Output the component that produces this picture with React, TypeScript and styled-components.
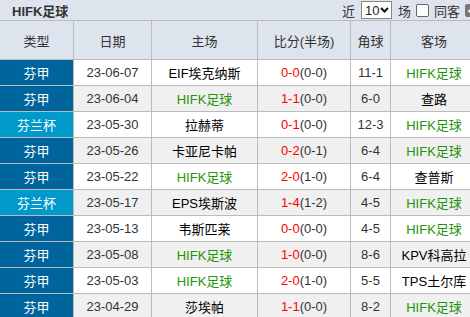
import React, { FC } from 'react';
import styled, { createGlobalStyle } from 'styled-components';

const GlobalStyle = createGlobalStyle`
  html, body {
    margin: 0;
    padding: 0;
    background: #fff;
    overflow: hidden;
  }
  body {
    font-family: "Liberation Sans", Arial, "Noto Sans CJK SC", sans-serif;
    font-size: 13px;
    color: #333;
  }
`;

const Panel = styled.div`
  width: 470px;
  height: 317px;
  overflow: hidden;
  background: #dee4ed;
`;

const TopBar = styled.div`
  height: 20px;
  display: flex;
  align-items: center;
  justify-content: space-between;
  padding-left: 12px;
  box-sizing: border-box;
`;

const Title = styled.div`
  font-weight: bold;
  font-size: 13px;
  color: #333;
  font-family: "Liberation Sans", "Noto Sans CJK SC", sans-serif;
`;

const Filters = styled.div`
  display: flex;
  align-items: center;
  gap: 3px;
  margin-right: -10px;
  font-size: 13px;
  color: #333;
`;

const Select = styled.div`
  width: 31px;
  height: 18px;
  box-sizing: border-box;
  border: 1px solid #888;
  background: #fff;
  display: flex;
  align-items: center;
  justify-content: space-between;
  padding: 0 2px 0 3px;
  font-size: 13px;
  color: #222;
  margin: 0 3px;
`;

const Box = styled.span<{ checked?: boolean }>`
  width: 13px;
  height: 13px;
  box-sizing: border-box;
  border-radius: 2px;
  border: 1px solid ${({ checked }) => (checked ? '#777' : '#666')};
  background: ${({ checked }) => (checked ? '#777' : '#fff')};
  display: inline-flex;
  align-items: center;
  justify-content: center;
  margin: 0 2px;
`;

const Table = styled.table`
  border-collapse: collapse;
  table-layout: fixed;
  width: 472px;
`;

const Th = styled.th<{ w: number }>`
  width: ${({ w }) => w}px;
  height: 38px;
  padding: 0;
  border: 1px solid #bbb;
  border-left: ${({ w }) => (w === 73 ? 'none' : '1px solid #bbb')};
  background: #dee4ed;
  font-weight: normal;
  color: #333;
  text-align: center;
`;

const Row = styled.tr<{ alt: boolean }>`
  background: ${({ alt }) => (alt ? '#f0f0f0' : '#fff')};
`;

const Td = styled.td`
  height: 25px;
  padding: 0;
  border: 1px solid #bbb;
  text-align: center;
  white-space: nowrap;
  color: #333;
`;

const TypeCell = styled(Td)<{ cup: boolean }>`
  border-left: none;
  background: ${({ cup }) => (cup ? '#0099cc' : '#00659c')};
  color: #fff;
`;

const Team = styled.span<{ home: boolean }>`
  color: ${({ home }) => (home ? '#1f930a' : '#000')};
`;

const Score = styled.span`
  color: #f00;
`;

interface Match {
  type: string;
  date: string;
  home: string;
  score: string;
  half: string;
  corner: string;
  away: string;
}

const TEAM = 'HIFK足球';

const matches: Match[] = [
  { type: '芬甲', date: '23-06-07', home: 'EIF埃克纳斯', score: '0-0', half: '(0-0)', corner: '11-1', away: TEAM },
  { type: '芬甲', date: '23-06-04', home: TEAM, score: '1-1', half: '(0-0)', corner: '6-0', away: '查路' },
  { type: '芬兰杯', date: '23-05-30', home: '拉赫蒂', score: '0-1', half: '(0-0)', corner: '12-3', away: TEAM },
  { type: '芬甲', date: '23-05-26', home: '卡亚尼卡帕', score: '0-2', half: '(0-1)', corner: '6-4', away: TEAM },
  { type: '芬甲', date: '23-05-22', home: TEAM, score: '2-0', half: '(1-0)', corner: '6-4', away: '查普斯' },
  { type: '芬兰杯', date: '23-05-17', home: 'EPS埃斯波', score: '1-4', half: '(1-2)', corner: '4-5', away: TEAM },
  { type: '芬甲', date: '23-05-13', home: '韦斯匹莱', score: '0-0', half: '(0-0)', corner: '4-5', away: TEAM },
  { type: '芬甲', date: '23-05-08', home: TEAM, score: '1-0', half: '(0-0)', corner: '8-6', away: 'KPV科高拉' },
  { type: '芬甲', date: '23-05-03', home: TEAM, score: '2-0', half: '(1-0)', corner: '5-5', away: 'TPS土尔库' },
  { type: '芬甲', date: '23-04-29', home: '莎埃帕', score: '1-1', half: '(0-0)', corner: '8-2', away: TEAM },
];

const columns: [string, number][] = [
  ['类型', 73],
  ['日期', 77],
  ['主场', 105],
  ['比分(半场)', 92],
  ['角球', 39],
  ['客场', 86],
];

const Chevron: FC = () => (
  <svg width="9" height="6" viewBox="0 0 9 6">
    <path d="M1 1l3.5 3.5L8 1" fill="none" stroke="#111" strokeWidth="2" />
  </svg>
);

const Tick: FC = () => (
  <svg width="10" height="10" viewBox="0 0 10 10">
    <path d="M1.5 5.2l2.3 2.3L8.7 2.2" fill="none" stroke="#fff" strokeWidth="2" />
  </svg>
);

const App: FC = () => {
  return (
    <Panel>
      <GlobalStyle />
      <TopBar>
        <Title>HIFK足球</Title>
        <Filters>
          <span>近</span>
          <Select>
            <span>10</span>
            <Chevron />
          </Select>
          <span>场</span>
          <Box />
          <span>同客</span>
          <Box checked>
            <Tick />
          </Box>
        </Filters>
      </TopBar>
      <Table>
        <thead>
          <tr>
            {columns.map(([label, w]) => (
              <Th key={label} w={w}>{label}</Th>
            ))}
          </tr>
        </thead>
        <tbody>
          {matches.map((m, i) => (
            <Row key={m.date} alt={i % 2 === 1}>
              <TypeCell cup={m.type === '芬兰杯'}>{m.type}</TypeCell>
              <Td>{m.date}</Td>
              <Td><Team home={m.home === TEAM}>{m.home}</Team></Td>
              <Td>
                <Score>{m.score}</Score>
                {m.half}
              </Td>
              <Td>{m.corner}</Td>
              <Td><Team home={m.away === TEAM}>{m.away}</Team></Td>
            </Row>
          ))}
        </tbody>
      </Table>
    </Panel>
  );
};

export default App;
